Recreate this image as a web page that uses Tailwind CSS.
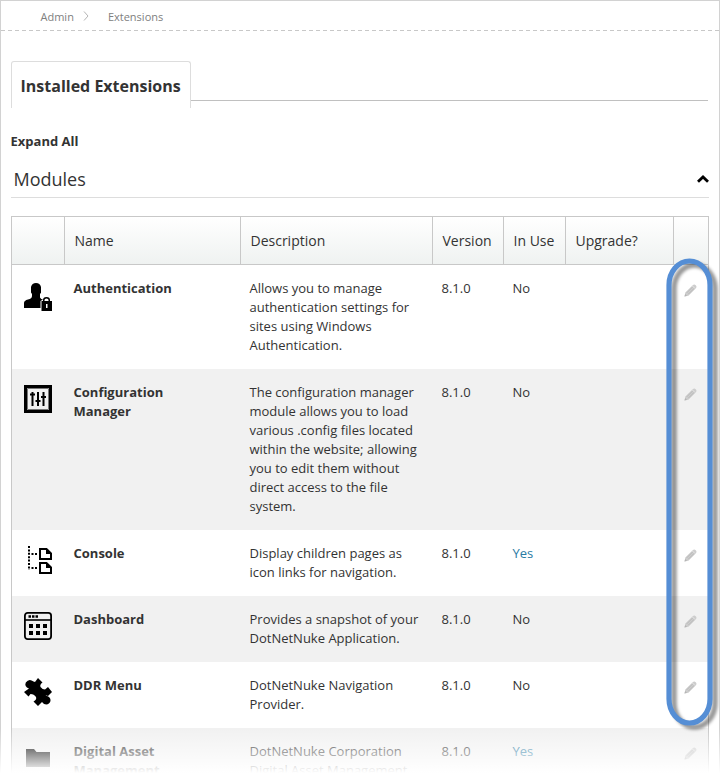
<!DOCTYPE html>
<html lang="en">
<head>
<meta charset="utf-8">
<title>Extensions</title>
<script src="https://cdn.jsdelivr.net/npm/@tailwindcss/browser@4"></script>
</head>
<body class="bg-white">
<svg class="hidden">
  <symbol id="pencil" viewBox="0 0 13 13">
    <path d="M.5 12.500 1.300 8.600 8.700 1.200Q10.200 -.2 11.700 1.200Q13.200 2.600 11.900 4.200L4.400 11.700Z" fill="#cdcdcd"/>
    <path d="M2.800 8.800 8.600 3M4.300 10.200 10.200 4.300" stroke="#b4b4b4" stroke-width=".8"/>
    <path d="M8.300 1.800 11.200 4.700" stroke="#eee" stroke-width=".7"/>
    <path d="M.5 12.500 1.200 10 3 11.800Z" fill="#b4b4b4"/>
  </symbol>
</svg>
<div class="relative flex flex-col w-[720px] h-[774px] overflow-hidden border border-b-0 border-[#d2d2d2] font-['Open_Sans','Noto_Sans',sans-serif] text-[13px] leading-[19px] text-[#333]">
  <nav class="flex items-center h-[30px] shrink-0 pl-[39.5px] text-[11px] text-[#808080]">
    <span>Admin</span>
    <svg class="ml-[9px] mr-[18px]" width="7" height="10" viewBox="0 0 7 10" fill="none" stroke="#b5b5b5"><path d="M1 .5 5 5 1 9.500"/></svg>
    <span>Extensions</span>
  </nav>
  <svg class="shrink-0 -mt-px" width="718" height="1"><path d="M0 .5H718" stroke="#c8c8c8" stroke-dasharray="4 3"/></svg>
  <main class="flex flex-col pl-[10px] pr-[10px] pt-[30px]">
    <div class="flex h-[47px]">
      <div class="w-[180px] shrink-0 h-[47px] border border-b-0 border-[#ddd] rounded-t-[3px] pl-[8.500px] pt-[13px] text-base leading-[22px] font-bold whitespace-nowrap">Installed Extensions</div>
      <div class="flex-1 h-[40px] border-b border-[#c0c0c0] mr-px"></div>
    </div>
    <div class="mt-[24px] font-bold -ml-[.5px]">Expand All</div>
    <div class="mt-[15px] h-[32px] flex justify-between border-b border-[#ddd] pl-[2.500px]">
      <h2 class="text-[18px] leading-[27px]">Modules</h2>
      <svg class="mt-[9px]" width="12" height="8" viewBox="0 0 12 8" fill="none" stroke="#000" stroke-width="2.800"><path d="M1 6.800 6 2 11 6.800"/></svg>
    </div>
    <section class="mt-[18px] border-x border-t border-[#c8c8c8] w-[698px]">
      <div class="grid grid-cols-[53px_176px_192px_71px_62px_108px_34px] h-[48px] border-b border-[#c8c8c8] bg-linear-to-b from-white to-[#eff2f1] text-[14px] leading-[47px] *:border-r *:border-[#c8c8c8] *:pl-[9.500px] *:whitespace-nowrap">
        <div></div><div>Name</div><div>Description</div><div>Version</div><div>In Use</div><div>Upgrade?</div><div class="border-r-0!"></div>
      </div>

      <div class="grid grid-cols-[53px_176px_192px_71px_62px_108px_34px] h-[104px] pt-[14px] *:pl-[8.500px] *:whitespace-nowrap">
        <div class="pl-[12px]!"><svg class="mt-[4px]" width="28" height="28" viewBox="0 0 28 28"><path d="M7 4Q8 0 12 0Q16 0 17 4V8Q17.500 10 16 11V14.500Q17 16.500 19 16.500L16.500 18V25H0V20Q0 17.500 4 16.500Q8 15.500 8 13V11Q6.500 9.500 7 8Z"/><path d="M18 18H19V17Q19 14 22.500 14Q26 14 26 17V18H28V28H17.500V18ZM20.500 18H24.500V17Q24.500 15.500 22.500 15.500Q20.500 15.500 20.500 17ZM22 21V25H23.500V21Z" fill-rule="evenodd"/></svg></div>
        <div class="font-bold">Authentication</div>
        <div>Allows you to manage<br>authentication settings for<br>sites using Windows<br>Authentication.</div>
        <div>8.1.0</div><div>No</div><div></div>
        <div class="pl-[10px]!"><svg class="mt-[5px]" width="13" height="13"><use href="#pencil"/></svg></div>
      </div>

      <div class="grid grid-cols-[53px_176px_192px_71px_62px_108px_34px] h-[161px] pt-[14px] bg-[#f1f1f1] *:pl-[8.500px] *:whitespace-nowrap">
        <div class="pl-[12px]!"><svg class="mt-[2px]" width="28" height="28" viewBox="0 0 28 28" fill="none" stroke="#000"><path d="M1.500 1.500H26.500V26.500H1.500Z" stroke-width="3"/><path d="M3.500 3.500H24.500V24.500H3.500Z" stroke="#777"/><path d="M8.500 7V21M14 7V21M19.500 7V21" stroke-width="2"/><path d="M6 9.500H11M11.500 16H16.500M17 12H22" stroke-width="2"/></svg></div>
        <div class="font-bold">Configuration<br>Manager</div>
        <div>The configuration manager<br>module allows you to load<br>various .config files located<br>within the website; allowing<br>you to edit them without<br>direct access to the file<br>system.</div>
        <div>8.1.0</div><div>No</div><div></div>
        <div class="pl-[10px]!"><svg class="mt-[5px]" width="13" height="13"><use href="#pencil"/></svg></div>
      </div>

      <div class="grid grid-cols-[53px_176px_192px_71px_62px_108px_34px] h-[66px] pt-[14px] *:pl-[8.500px] *:whitespace-nowrap">
        <div class="pl-[12px]!"><svg class="mt-[2px]" width="28" height="28" viewBox="0 0 28 28" fill="none" stroke="#000" stroke-width="2"><path d="M5 0V24" stroke-dasharray="2 1.400"/><path d="M7.500 8H14M7.500 22H14" stroke-dasharray="2 1.500"/><path d="M16 3H22.500L27 7.500V13H16ZM16 17H22.500L27 21.500V27H16Z"/><path d="M22 2.500V8H28ZM22 16.500V22H28Z" fill="#000" stroke="none"/></svg></div>
        <div class="font-bold">Console</div>
        <div>Display children pages as<br>icon links for navigation.</div>
        <div>8.1.0</div><div class="text-[#2a7ba3]">Yes</div><div></div>
        <div class="pl-[10px]!"><svg class="mt-[5px]" width="13" height="13"><use href="#pencil"/></svg></div>
      </div>

      <div class="grid grid-cols-[53px_176px_192px_71px_62px_108px_34px] h-[66px] pt-[14px] bg-[#f1f1f1] *:pl-[8.500px] *:whitespace-nowrap">
        <div class="pl-[12px]!"><svg class="mt-[2px]" width="28" height="28" viewBox="0 0 28 28"><rect x=".9" y=".9" width="26.200" height="26.200" rx="2.800" fill="none" stroke="#000" stroke-width="1.800"/><path d="M1 8H27" stroke="#000" stroke-width="1.600"/><path d="M4.500 3.300H7V5.800H4.500ZM8 3.300H10.500V5.800H8ZM11.500 3.300H14V5.800H11.500ZM5 12H9V16H5ZM12 12H16V16H12ZM19 12H23V16H19ZM5 19H9V23H5ZM12 19H16V23H12ZM19 19H23V23H19Z"/></svg></div>
        <div class="font-bold">Dashboard</div>
        <div>Provides a snapshot of your<br>DotNetNuke Application.</div>
        <div>8.1.0</div><div>No</div><div></div>
        <div class="pl-[10px]!"><svg class="mt-[5px]" width="13" height="13"><use href="#pencil"/></svg></div>
      </div>

      <div class="grid grid-cols-[53px_176px_192px_71px_62px_108px_34px] h-[66px] pt-[14px] *:pl-[8.500px] *:whitespace-nowrap">
        <div class="pl-[12px]!"><svg class="mt-[2px]" width="28" height="28" viewBox="0 0 28 28"><path d="M9.500 3.500 11 4 14 0 18.500 4.500Q15.500 6.500 16.500 9Q18.500 11.500 21 11.500L24 9 28 14 24 18Q22.500 17 21.500 17.800Q27 18.500 26.500 23Q25 27.500 20 26L18 24 14 28 9.500 23.500Q13 21.500 12 19Q10 16 6.500 16L4.500 18.500 0 14 5 10.500Q0 8.500 1.800 4.500Q5 0 9.500 3.500Z"/></svg></div>
        <div class="font-bold">DDR Menu</div>
        <div>DotNetNuke Navigation<br>Provider.</div>
        <div>8.1.0</div><div>No</div><div></div>
        <div class="pl-[10px]!"><svg class="mt-[5px]" width="13" height="13"><use href="#pencil"/></svg></div>
      </div>

      <div class="grid grid-cols-[53px_176px_192px_71px_62px_108px_34px] h-[66px] pt-[14px] bg-[#f1f1f1] *:pl-[8.500px] *:whitespace-nowrap">
        <div class="pl-[12px]!"><svg class="mt-[2px]" width="28" height="28" viewBox="0 0 28 28"><path d="M2 5H10L12.500 8H26V23H2Z"/></svg></div>
        <div class="font-bold">Digital Asset<br>Management</div>
        <div>DotNetNuke Corporation<br>Digital Asset Management</div>
        <div>8.1.0</div><div class="text-[#2a7ba3]">Yes</div><div></div>
        <div class="pl-[10px]!"><svg class="mt-[5px]" width="13" height="13"><use href="#pencil"/></svg></div>
      </div>
    </section>
  </main>
</div>
<div class="absolute left-0 top-[728px] w-[720px] h-[46px] bg-linear-to-b from-white/0 to-white to-98%"></div>
<svg class="absolute left-0 top-0" width="719" height="774" viewBox="0 0 719 774" fill="none">
  <defs><filter id="soft" x="-50%" y="-5%" width="200%" height="110%"><feGaussianBlur stdDeviation="1.500"/></filter></defs>
  <rect x="674" y="265" width="41" height="462" rx="20.500" ry="24" stroke="#000" stroke-opacity=".4" stroke-width="5.500" filter="url(#soft)"/>
  <rect x="669" y="261" width="41" height="462" rx="20.500" ry="24" stroke="#558ed5" stroke-width="5.200"/>
</svg>
</body>
</html>
